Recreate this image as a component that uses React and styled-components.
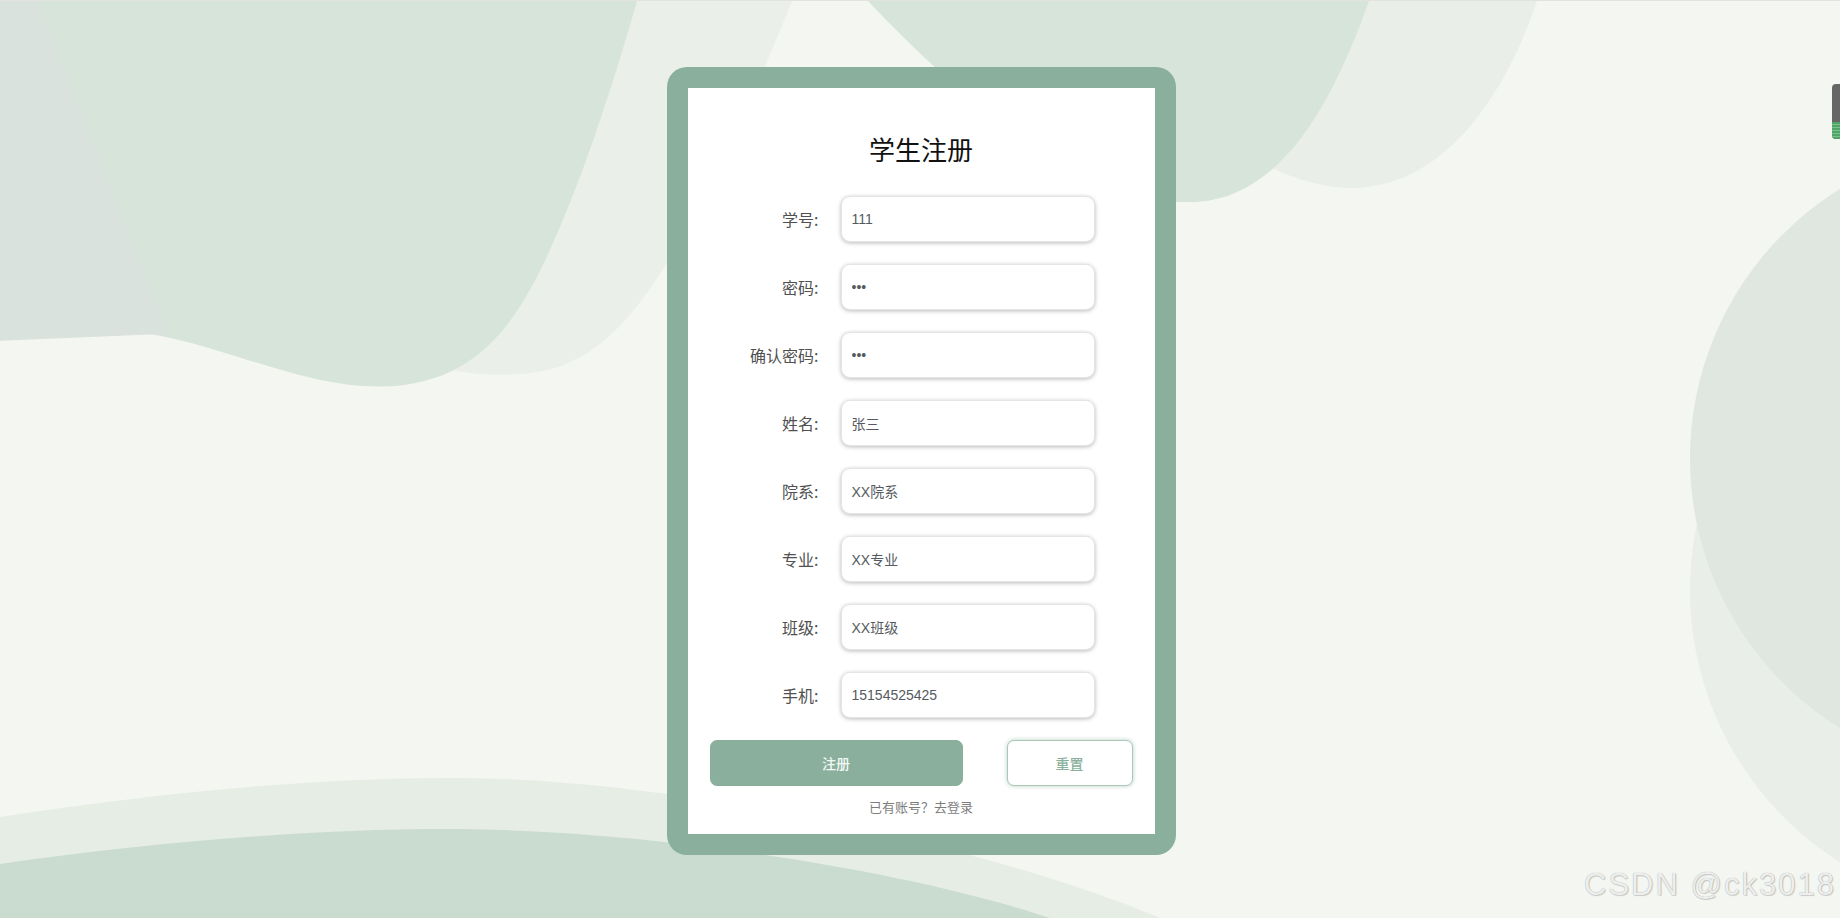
import React from 'react';
import styled, { createGlobalStyle } from 'styled-components';

const GlobalStyle = createGlobalStyle`
  html, body {
    margin: 0;
    padding: 0;
    overflow: hidden;
  }
  body {
    font-family: "Liberation Sans", "Noto Sans CJK SC", sans-serif;
  }
`;

const green = '#8ab09d';

const Page = styled.div`
  position: relative;
  min-height: 918px;
  box-sizing: border-box;
  border-top: 1px solid #e2e3e0;
  background-color: #f4f6f1;
  overflow: hidden;
  display: flex;
  justify-content: center;
  align-items: flex-start;
  padding-top: 66px;
  padding-left: 2px;
`;

const Backdrop = styled.svg`
  position: absolute;
  inset: 0;
  width: 100%;
  height: 100%;
  z-index: 0;
`;

const Card = styled.div`
  position: relative;
  z-index: 1;
  width: 467px;
  padding: 21px;
  background-color: ${green};
  border-radius: 20px;
`;

const Panel = styled.div`
  background-color: #ffffff;
  padding: 47px 22px 17px;
  display: flex;
  flex-direction: column;
`;

const Title = styled.h2`
  margin: 0 0 33px;
  text-align: center;
  font-family: "Noto Sans CJK SC", sans-serif;
  font-size: 26px;
  line-height: 28px;
  font-weight: 400;
  color: #111111;
`;

const Form = styled.form`
  display: flex;
  flex-direction: column;
  gap: 22px;
`;

const FieldRow = styled.div`
  display: grid;
  grid-template-columns: 109px 254px;
  column-gap: 22px;
  align-items: center;
`;

const Label = styled.label`
  text-align: right;
  font-family: "Noto Sans CJK SC", sans-serif;
  font-size: 16px;
  line-height: 20px;
  color: #505050;
`;

const Input = styled.input`
  box-sizing: border-box;
  width: 100%;
  height: 46px;
  padding: 0 10px;
  border: 1px solid #e3e5e8;
  border-radius: 9px;
  background: #ffffff;
  box-shadow: 0 1px 4px rgba(0, 0, 0, 0.28);
  font-family: "Liberation Sans", "Noto Sans CJK SC", sans-serif;
  font-size: 14px;
  color: #555a60;
  outline: none;
`;

const Actions = styled.div`
  display: flex;
  justify-content: space-between;
  margin-top: 22px;
`;

const Button = styled.button`
  box-sizing: border-box;
  width: ${({ wide }) => (wide ? '253px' : '126px')};
  height: 46px;
  border-radius: 7px;
  border: 1px solid ${({ primary }) => (primary ? green : '#a9c8b8')};
  background-color: ${({ primary }) => (primary ? green : '#ffffff')};
  color: ${({ primary }) => (primary ? '#f4f8f5' : green)};
  box-shadow: ${({ primary }) => (primary ? 'none' : '0 0 4px rgba(120, 170, 145, 0.55)')};
  font-family: "Noto Sans CJK SC", sans-serif;
  font-size: 14px;
  font-weight: 500;
  cursor: pointer;
`;

const Footer = styled.p`
  margin: 11px 0 0;
  text-align: center;
  font-family: "Noto Sans CJK SC", sans-serif;
  font-size: 13px;
  line-height: 20px;
  color: #7d7d7d;
  cursor: pointer;
`;

const Watermark = styled.div`
  position: absolute;
  left: 1584px;
  top: 866px;
  z-index: 2;
  font-family: "Liberation Sans", sans-serif;
  font-size: 31px;
  line-height: 36px;
  letter-spacing: 2px;
  color: #eeeeee;
  text-shadow: 0 0 1px rgba(0, 0, 0, 0.35), 1px 1px 1px rgba(0, 0, 0, 0.15);
  white-space: nowrap;
`;

const ScrollThumb = styled.div`
  position: absolute;
  right: 0;
  top: 83px;
  z-index: 2;
  width: 8px;
  height: 55px;
  border-radius: 4px 0 0 4px;
  background: #666666;
  overflow: hidden;

  &::after {
    content: '';
    position: absolute;
    left: 0;
    right: 0;
    bottom: 0;
    height: 17px;
    background: repeating-linear-gradient(
      to bottom,
      #4da566 0,
      #4da566 2px,
      #7cc08f 2px,
      #7cc08f 3px
    );
  }
`;

const fields = [
  { label: '学号:', value: '111' },
  { label: '密码:', value: '111', type: 'password' },
  { label: '确认密码:', value: '111', type: 'password' },
  { label: '姓名:', value: '张三' },
  { label: '院系:', value: 'XX院系' },
  { label: '专业:', value: 'XX专业' },
  { label: '班级:', value: 'XX班级' },
  { label: '手机:', value: '15154525425' },
];

function Background() {
  return (
    <Backdrop viewBox="0 0 1840 918" preserveAspectRatio="none">
      {/* top left */}
      <path
        d="M300,0 L792,0 C760,80 720,170 680,240 C640,310 600,360 540,371 C500,378 460,372 430,366 L300,300 Z"
        fill="#eaf0e9"
      />
      <path
        d="M0,0 L637,0 C610,95 575,200 540,270 C510,330 470,385 380,386 C290,387 200,330 110,330 C70,330 30,335 0,340 Z"
        fill="#d7e4da"
      />
      <path d="M0,0 L38,0 L168,333 L0,340 Z" fill="#d9e2dc" />
      {/* top right */}
      <path
        d="M1080,0 L1537,0 C1505,95 1445,183 1358,187 C1270,191 1170,110 1080,0 Z"
        fill="#e9eee8"
      />
      <path
        d="M868,0 L1369,0 C1335,95 1285,195 1198,201 C1110,207 990,130 868,0 Z"
        fill="#d7e4da"
      />
      {/* right circles */}
      <circle cx="2012" cy="590" r="322" fill="#e9eee8" />
      <circle cx="2008" cy="458" r="318" fill="#dfe7e0" />
      {/* bottom waves */}
      <path
        d="M0,817 C160,792 330,776 474,778 C690,781 1000,850 1160,918 L0,918 Z"
        fill="#e5ede4"
      />
      <path
        d="M0,864 C150,842 320,828 460,829 C650,831 900,868 1050,918 L0,918 Z"
        fill="#cadbcf"
      />
    </Backdrop>
  );
}

export default function App() {
  return (
    <Page>
      <GlobalStyle />
      <Background />
      <Card>
        <Panel>
          <Title>学生注册</Title>
          <Form onSubmit={(e) => e.preventDefault()}>
            {fields.map((f) => (
              <FieldRow key={f.label}>
                <Label>{f.label}</Label>
                <Input type={f.type || 'text'} defaultValue={f.value} />
              </FieldRow>
            ))}
          </Form>
          <Actions>
            <Button primary wide>注册</Button>
            <Button>重置</Button>
          </Actions>
          <Footer>已有账号？去登录</Footer>
        </Panel>
      </Card>
      <Watermark>CSDN @ck3018</Watermark>
      <ScrollThumb />
    </Page>
  );
}
